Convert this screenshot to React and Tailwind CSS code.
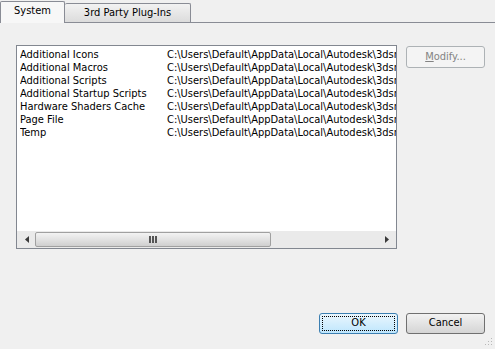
import React from 'react'

const rows = [
  'Additional Icons',
  'Additional Macros',
  'Additional Scripts',
  'Additional Startup Scripts',
  'Hardware Shaders Cache',
  'Page File',
  'Temp',
]
const path = 'C:\\Users\\Default\\AppData\\Local\\Autodesk\\3dsmax\\2012 - 64bit\\enu'

const font = { fontFamily: 'Tahoma, "DejaVu Sans Condensed", "Liberation Sans", sans-serif' }

const Tabs = () => (
  <div className="flex h-[23px] items-end border-b border-[#898c95]">
    <div className="relative z-10 -mb-px flex h-[22px] w-[65px] items-center justify-center rounded-t-[2px] border border-b-0 border-[#898c95] bg-[#f7f7f7] pb-[2px] text-[11px] text-black">
      System
    </div>
    <div className="flex h-[19px] w-[126px] items-center justify-center rounded-t-[2px] border border-b-0 border-l-0 border-[#898c95] bg-gradient-to-b from-[#f2f2f2] to-[#dcdcdc] text-[11px] text-black">
      3rd Party Plug-Ins
    </div>
  </div>
)

const ScrollBar = () => (
  <div className="flex h-[17px] items-stretch bg-[#eaeaea] p-[1px]">
    <div className="flex w-[17px] items-center justify-center">
      <svg width="4" height="7" viewBox="0 0 4 7"><path d="M4 0L0 3.5L4 7z" fill="#3a3a3a" /></svg>
    </div>
    <div className="flex w-[236px] items-center justify-center rounded-[2px] border border-[#a0a0a0] bg-gradient-to-b from-[#f3f3f3] via-[#e2e2e2] to-[#cfcfcf]">
      <div className="flex gap-[1px]">
        <span className="h-[7px] w-[2px] bg-[#555]" />
        <span className="h-[7px] w-[2px] bg-[#555]" />
        <span className="h-[7px] w-[2px] bg-[#555]" />
      </div>
    </div>
    <div className="flex-1" />
    <div className="flex w-[17px] items-center justify-center">
      <svg width="4" height="7" viewBox="0 0 4 7"><path d="M0 0L4 3.5L0 7z" fill="#3a3a3a" /></svg>
    </div>
  </div>
)

const App = () => {
  return (
    <div className="h-[349px] w-[495px] overflow-hidden bg-[#f0f0f0] text-black" style={font}>
      <Tabs />
      <div className="flex gap-[9px] pl-[16px] pt-[22px]">
        <div className="flex h-[204px] w-[381px] flex-col border border-[#828790] bg-white">
          <div className="flex-1 overflow-hidden pl-[3px] pt-[2px]">
            {rows.map((r) => (
              <div key={r} className="flex h-[13px] items-center overflow-hidden whitespace-nowrap text-[11px] leading-[13px]">
                <span className="w-[147px] shrink-0">{r}</span>
                <span>{path}</span>
              </div>
            ))}
          </div>
          <ScrollBar />
        </div>
        <button className="mt-[1px] h-[22px] w-[79px] rounded-[3px] border border-[#adb2b5] bg-[#f4f4f4] text-[11px] text-[#838383]">
          <u>M</u>odify...
        </button>
      </div>
      <div className="flex justify-end gap-[8px] pr-[10px] pt-[64px]">
        <button className="h-[21px] w-[79px] rounded-[3px] border border-[#3c7fb1] bg-gradient-to-b from-[#eaf6fd] to-[#bee6fd] p-[2px] text-[11px]">
          <div className="flex h-full w-full items-center justify-center border border-dotted border-black">OK</div>
        </button>
        <button className="h-[21px] w-[79px] rounded-[3px] border border-[#707070] bg-gradient-to-b from-[#f2f2f2] to-[#d5d5d5] text-[11px]">
          Cancel
        </button>
      </div>
      <div className="flex justify-end pr-[2px] pt-[2px]">
        <svg width="10" height="10" viewBox="0 0 10 10">
          <rect x="8" y="2" width="1" height="1" fill="#b8b8b8" />
          <rect x="5" y="5" width="1" height="1" fill="#b8b8b8" />
          <rect x="8" y="5" width="1" height="1" fill="#b8b8b8" />
          <rect x="2" y="8" width="1" height="1" fill="#b8b8b8" />
          <rect x="5" y="8" width="1" height="1" fill="#b8b8b8" />
          <rect x="8" y="8" width="1" height="1" fill="#b8b8b8" />
        </svg>
      </div>
    </div>
  )
}

export default App
